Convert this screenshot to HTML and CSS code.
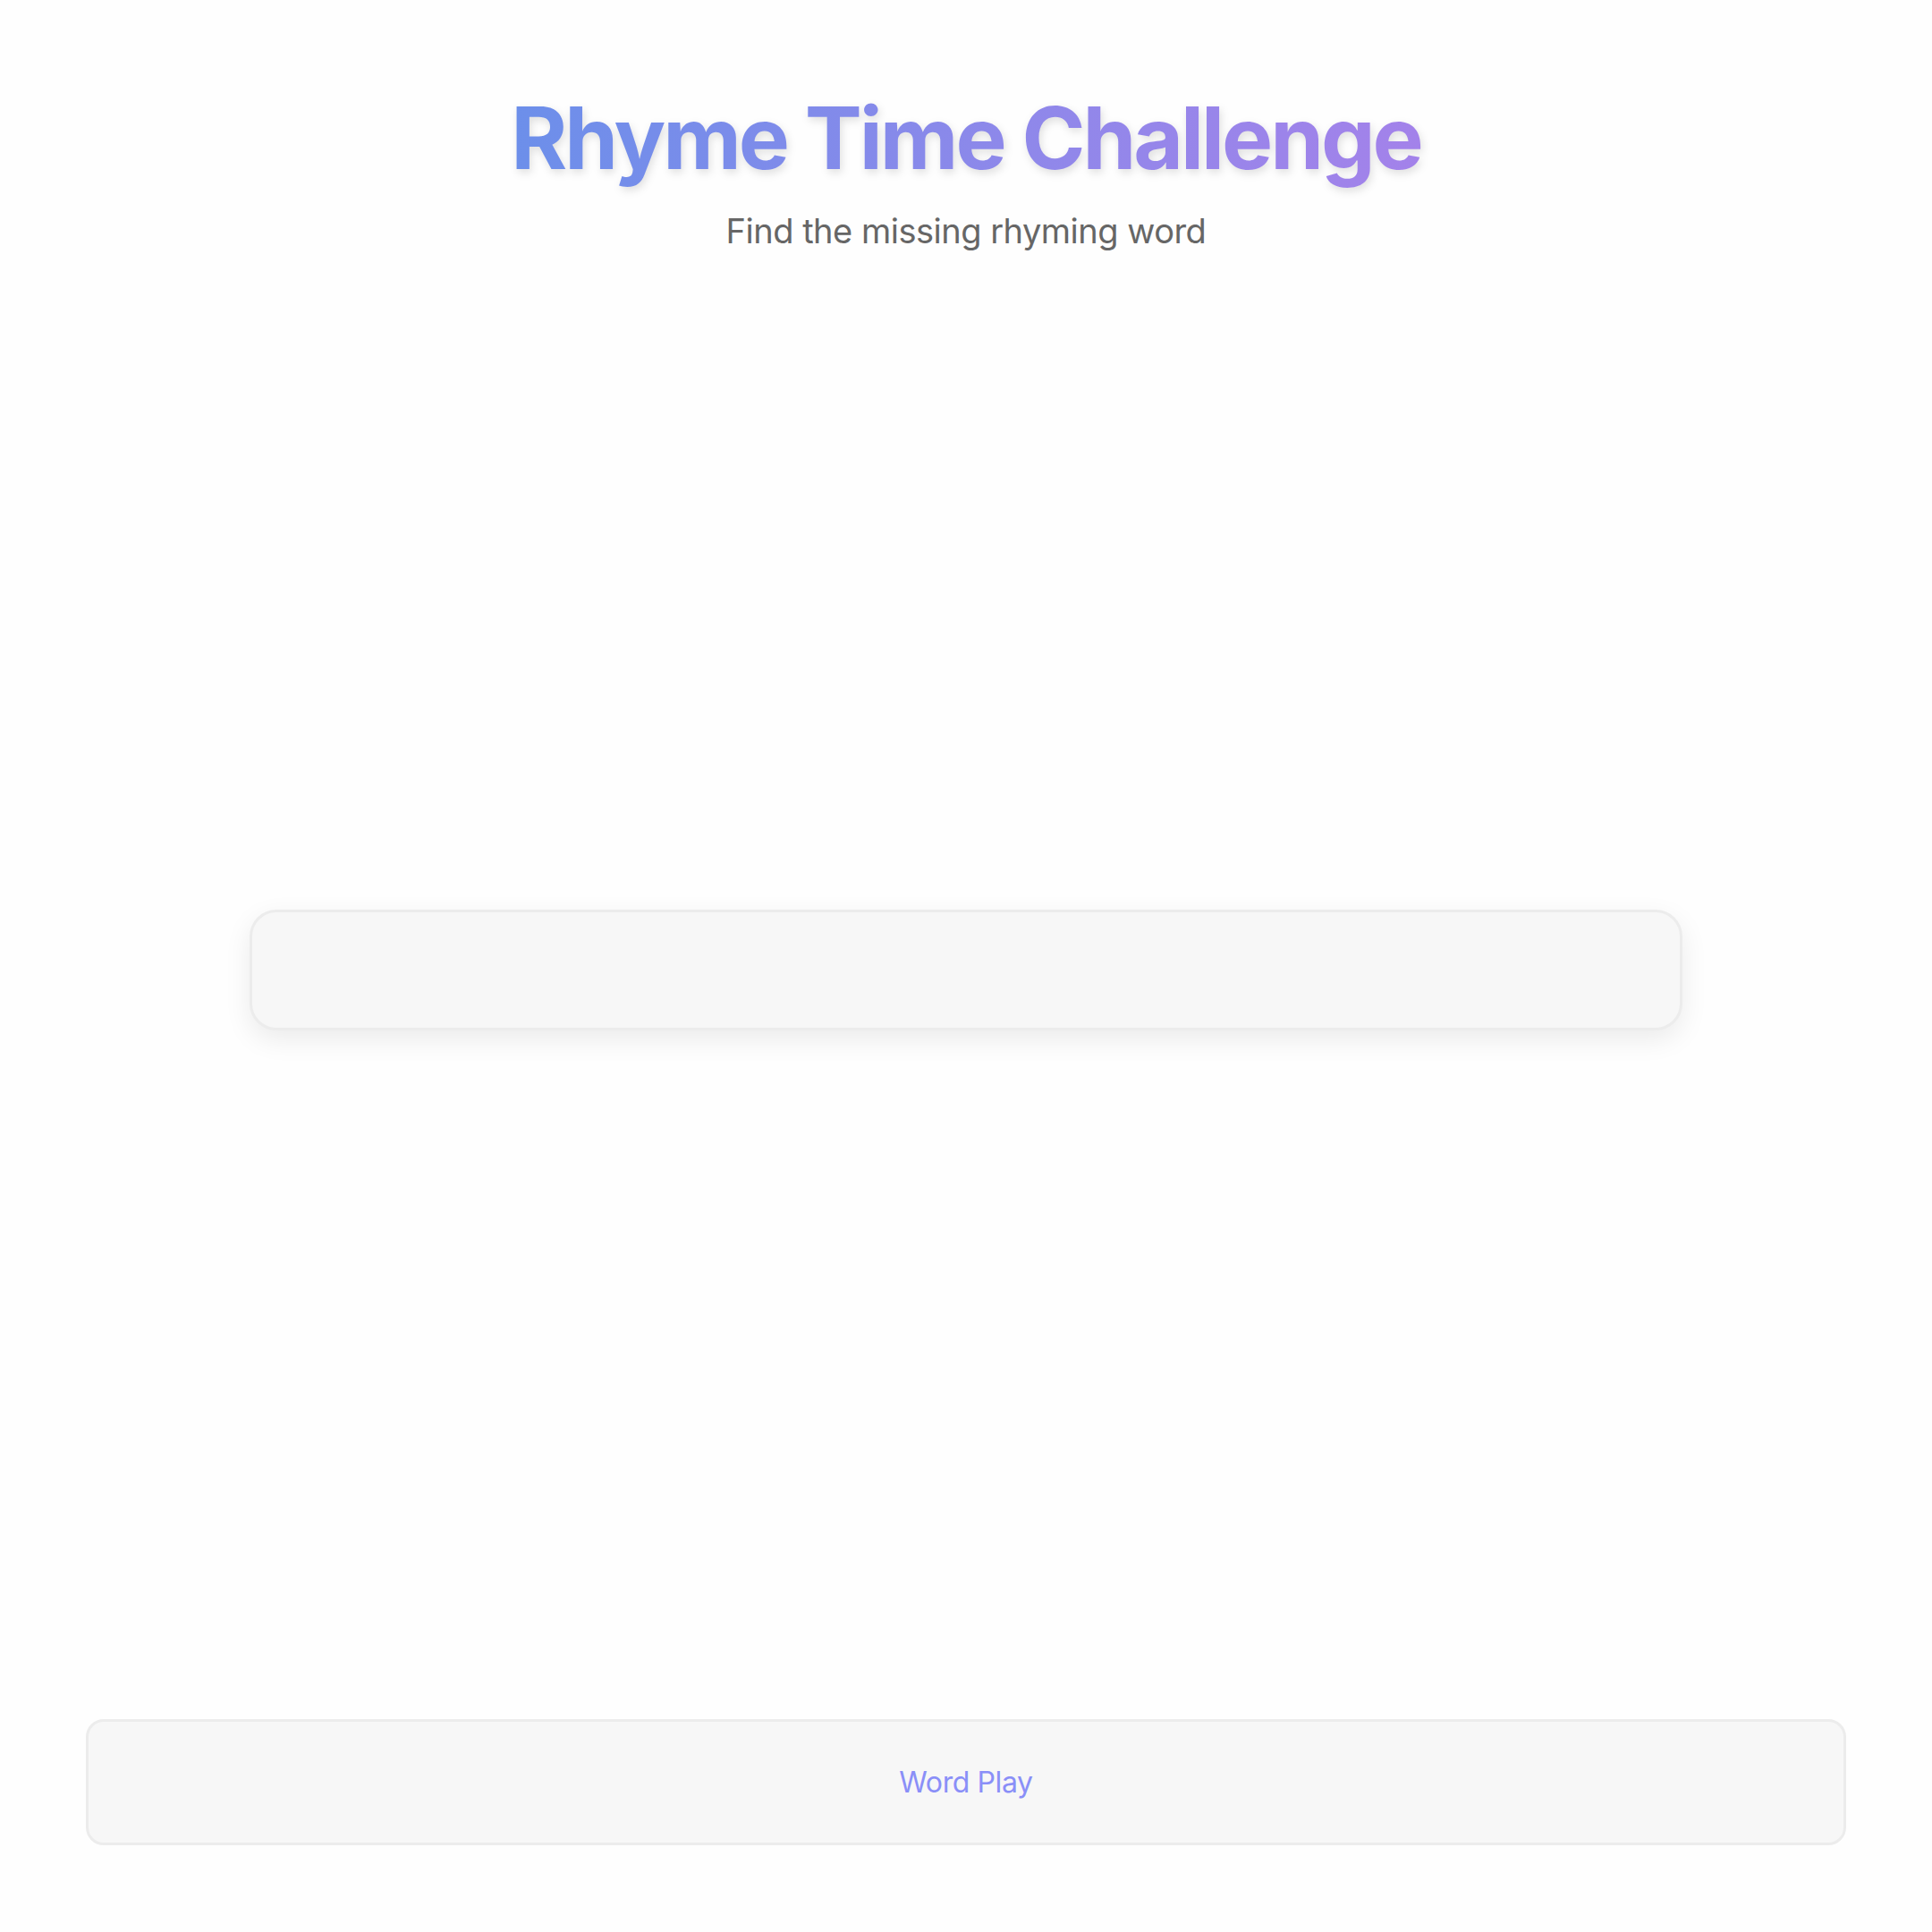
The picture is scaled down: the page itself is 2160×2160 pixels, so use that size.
FILE: index.html
```html
<!DOCTYPE html>
<html lang="en">
<head>
<meta charset="utf-8">
<title>Rhyme Time Challenge</title>
<link rel="stylesheet" href="styles.css">
</head>
<body>
<div class="page">
  <header class="header">
    <h1 class="title">Rhyme Time Challenge</h1>
    <p class="subtitle">Find the missing rhyming word</p>
  </header>
  <main class="main">
    <div class="puzzle-card"></div>
  </main>
  <footer class="footer">
    <span class="footer-label">Word Play</span>
  </footer>
</div>
</body>
</html>
```

FILE: styles.css
```css
* {
  box-sizing: border-box;
}

html, body {
  margin: 0;
  padding: 0;
}

body {
  background: #fefefe;
  font-family: Inter, "Noto Sans", "Liberation Sans", sans-serif;
  color: #333;
}

.page {
  min-height: 100vh;
  display: flex;
  flex-direction: column;
}

.header {
  padding-top: 97px;
  text-align: center;
}

.title {
  margin: 0;
  font-size: 96px;
  line-height: 1.2;
  font-weight: 700;
  letter-spacing: -3px;
  display: inline-block;
  background: linear-gradient(90deg, #6c8fea 0%, #8e88ea 55%, #a382ea 100%);
  -webkit-background-clip: text;
  background-clip: text;
  color: transparent;
  filter: drop-shadow(2px 4px 5px rgba(0, 0, 0, 0.12));
}

.subtitle {
  margin: 24px 0 0;
  font-size: 38px;
  line-height: 1.2;
  letter-spacing: -0.5px;
  color: #666;
}

.main {
  flex: 1;
  display: flex;
  align-items: center;
  justify-content: center;
  padding-bottom: 34px;
}

.puzzle-card {
  width: 1602px;
  height: 135px;
  background: #f7f7f7;
  border: 3px solid #ececec;
  border-radius: 30px;
  box-shadow: 0 10px 30px rgba(0, 0, 0, 0.08);
}

.footer {
  margin: 0 96px 97px;
  height: 141px;
  background: #f7f7f7;
  border: 3px solid #ececec;
  border-radius: 20px;
  display: flex;
  align-items: center;
  justify-content: center;
}

.footer-label {
  font-size: 32px;
  letter-spacing: -0.4px;
  color: #8a8ff8;
}
```
